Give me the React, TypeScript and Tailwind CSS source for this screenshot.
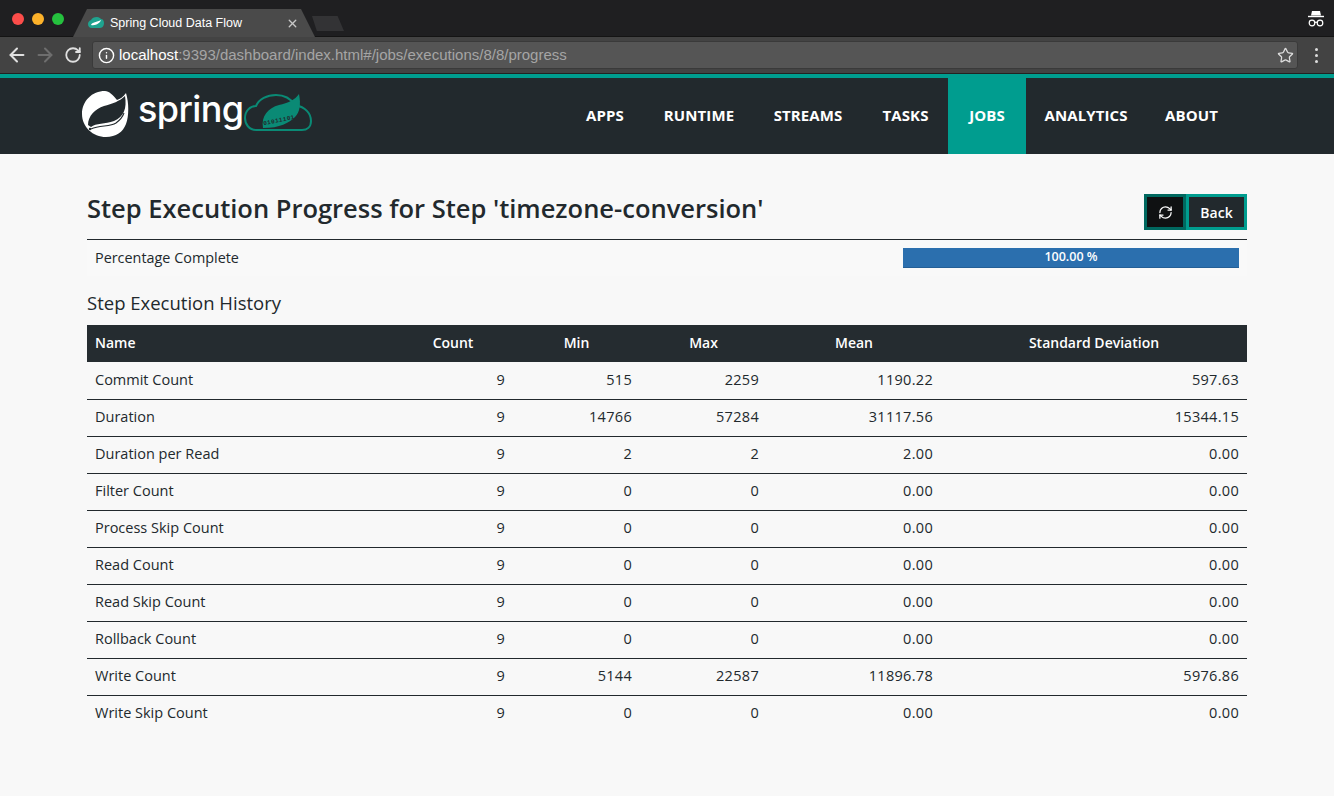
import React from "react";
import { ArrowLeft, ArrowRight, RotateCw, Info, Star, X, RefreshCw } from "lucide-react";

const navItems = [
  { label: "APPS", width: "w-[80px]" },
  { label: "RUNTIME", width: "w-[108px]" },
  { label: "STREAMS", width: "w-[110px]" },
  { label: "TASKS", width: "w-[85px]" },
  { label: "JOBS", width: "w-[78px]", active: true },
  { label: "ANALYTICS", width: "w-[120px]" },
  { label: "ABOUT", width: "w-[91px]" },
];

const rows = [
  ["Commit Count", "9", "515", "2259", "1190.22", "597.63"],
  ["Duration", "9", "14766", "57284", "31117.56", "15344.15"],
  ["Duration per Read", "9", "2", "2", "2.00", "0.00"],
  ["Filter Count", "9", "0", "0", "0.00", "0.00"],
  ["Process Skip Count", "9", "0", "0", "0.00", "0.00"],
  ["Read Count", "9", "0", "0", "0.00", "0.00"],
  ["Read Skip Count", "9", "0", "0", "0.00", "0.00"],
  ["Rollback Count", "9", "0", "0", "0.00", "0.00"],
  ["Write Count", "9", "5144", "22587", "11896.78", "5976.86"],
  ["Write Skip Count", "9", "0", "0", "0.00", "0.00"],
];

const headers = ["Count", "Min", "Max", "Mean", "Standard Deviation"];

const Leaf = () => (
  <svg width="56" height="54" viewBox="0 0 56 54" className="shrink-0">
    <path
      d="M48 7C45 11 42 13 39 14 35 9 31 5 27 5 14 5 4 15 4 28S15 51 28 51C38 51 45 46 48 38 51 30 51 17 48 7Z"
      fill="#fff"
    />
    <path
      d="M10 39C10 30 17 23 26 20 34 18 42 15 47 10 49 22 46 31 36 35 27 38 18 37 13 41Z"
      fill="#22292d"
    />
    <path d="M13 43C22 39 32 41 38 37 42 34 45 30 46 27" fill="none" stroke="#22292d" strokeWidth="1.1" />
    <circle cx="12" cy="43" r="1.2" fill="#22292d" />
  </svg>
);

const CloudLogo = () => (
  <div className="relative w-[72px] h-[50px] shrink-0 mb-[4px]">
    <svg width="72" height="50" viewBox="0 0 72 50" className="absolute inset-0">
      <path
        d="M14 44C7 44 3 38 3 32 3 25 8 20 14 20 17 13 25 9 34 9 42 9 49 13 53 19 64 21 69 28 69 35 69 41 65 44 60 44Z"
        fill="none"
        stroke="#0a8a75"
        strokeWidth="2"
      />
      <path d="M21 42C19 30 26 22 37 19 46 17 53 14 57 8 59 18 58 26 53 31 47 37 38 42 21 42Z" fill="#0a8a75" />
    </svg>
    <span className="absolute left-[21px] top-[31px] text-[6px] leading-[7px] tracking-[0.4px] font-bold text-[#22292d] font-['Liberation_Mono',monospace] -rotate-[12deg]">
      01011101
    </span>
  </div>
);

const Incognito = () => (
  <svg width="18" height="18" viewBox="0 0 18 18" fill="none">
    <path d="M5 1h8l1 4.5H4Z" fill="#fff" />
    <path d="M1 6.5h16" stroke="#fff" strokeWidth="1.4" />
    <circle cx="5" cy="13" r="2.8" stroke="#fff" strokeWidth="1.2" />
    <circle cx="13" cy="13" r="2.8" stroke="#fff" strokeWidth="1.2" />
    <path d="M7.8 12.5c.8-.5 1.6-.5 2.4 0" stroke="#fff" strokeWidth="1.2" />
  </svg>
);

const Favicon = () => (
  <svg width="16" height="12" viewBox="0 0 16 12">
    <path
      d="M4 11C1 11 0 9 0 7c0-2 1-3 3-4 1-2 3-3 6-3 2 0 3 1 4 2 2 0 3 2 3 4s-1 5-4 5Z"
      fill="#1fa38f"
    />
    <path d="M3 8c1-3 6-3 10-5-1 3-5 6-10 5Z" fill="#fff" />
  </svg>
);

const BrowserChrome = () => (
  <div className="font-['Liberation_Sans',Arial,sans-serif]">
    <div className="h-[37px] bg-[#1f1f21] border-b border-[#141414] flex items-end relative">
      <div className="absolute left-[12px] top-[13px] flex gap-[8px]">
        <span className="w-[12px] h-[12px] rounded-full bg-[#fc4d4a]" />
        <span className="w-[12px] h-[12px] rounded-full bg-[#fdb22a]" />
        <span className="w-[12px] h-[12px] rounded-full bg-[#25c13e]" />
      </div>
      <div className="ml-[73px] mb-[-1px] w-[242px] h-[28px] bg-[#4a4a4a] [clip-path:polygon(0_100%,14px_0,228px_0,100%_100%)] flex items-center pl-[15px] pr-[16px] text-white text-[12.5px]">
        <Favicon />
        <span className="ml-[6px] grow">Spring Cloud Data Flow</span>
        <X size={13} strokeWidth={2.5} className="text-[#c8c8c8]" />
      </div>
      <div className="ml-[-3px] mb-[5px] w-[32px] h-[15px] bg-[#333335] [clip-path:polygon(0_0,80%_0,100%_100%,15%_100%)]" />
      <div className="absolute right-[9px] top-[10px]">
        <Incognito />
      </div>
    </div>
    <div className="h-[37px] bg-[#434343] border-b border-[#222] flex items-center text-[#e0e0e0]">
      <div className="w-[92px] flex items-center pl-[3px]">
        <span className="w-[28px] flex justify-center">
          <ArrowLeft size={22} strokeWidth={2.2} />
        </span>
        <span className="w-[28px] flex justify-center">
          <ArrowRight size={22} strokeWidth={2.2} className="text-[#6e6e6e]" />
        </span>
        <span className="w-[28px] flex justify-center">
          <RotateCw size={18} strokeWidth={2.4} />
        </span>
      </div>
      <div className="w-[1206px] h-[28px] rounded-[3px] bg-[#555] border border-[#3a3a3a] flex items-center pl-[5px] pr-[3px]">
        <Info size={17} strokeWidth={2} className="text-white" />
        <span className="ml-[4px] grow text-[15px] pt-[1px] text-[#a5a5a5]">
          <span className="text-white">localhost</span>:9393/dashboard/index.html#/jobs/executions/8/8/progress
        </span>
        <Star size={17} strokeWidth={1.8} className="text-[#ddd]" />
      </div>
      <div className="grow flex flex-col items-center gap-[3px]">
        <span className="w-[3px] h-[3px] rounded-full bg-[#ddd]" />
        <span className="w-[3px] h-[3px] rounded-full bg-[#ddd]" />
        <span className="w-[3px] h-[3px] rounded-full bg-[#ddd]" />
      </div>
    </div>
  </div>
);

const Header = () => (
  <div className="border-t-[4px] border-[#009d8f] bg-[#22292d] h-[80px] flex justify-between pl-[78px] pr-[97px]">
    <div className="flex items-center mb-[6px]">
      <Leaf />
      <span className="ml-[4px] w-[104px] shrink-0 whitespace-nowrap text-white text-[36px] leading-none font-['Inter',sans-serif] font-medium tracking-[-0.6px] mb-[8px]">
        spring
      </span>
      <CloudLogo />
    </div>
    <nav className="flex">
      {navItems.map((item) => (
        <a
          key={item.label}
          className={`${item.width} flex items-center justify-center pb-[1px] text-white text-[15px] font-bold tracking-[0.1px] ${
            item.active ? "bg-[#009d8f]" : ""
          }`}
        >
          {item.label}
        </a>
      ))}
    </nav>
  </div>
);

export default function App() {
  return (
    <div className="h-[796px] overflow-hidden bg-[#f8f8f8] text-[#22292d] font-['Open_Sans',sans-serif]">
      <BrowserChrome />
      <Header />
      <main className="px-[87px] pt-[40px]">
        <div className="flex justify-between items-start h-[46px] border-b border-[#22292d]">
          <h1 className="text-[25.5px] leading-[28px] font-semibold">
            Step Execution Progress for Step 'timezone-conversion'
          </h1>
          <div className="flex">
            <button className="w-[42px] h-[36px] bg-[#0f1112] border-[3px] border-[#00685f] flex items-center justify-center text-white">
              <RefreshCw size={15} strokeWidth={2} />
            </button>
            <button className="w-[61px] h-[36px] bg-[#22292d] border-[3px] border-[#009d8f] flex items-center justify-center text-white text-[14px] font-semibold">
              Back
            </button>
          </div>
        </div>
        <div className="flex items-center justify-between h-[36px] pl-[8px] pr-[8px] text-[14.4px] bg-[#f9f9f9]">
          <span>Percentage Complete</span>
          <div className="w-[336px] h-[20px] bg-[#2b6fae] border-b border-[#245f96] text-white text-[12.5px] font-semibold leading-[18px] text-center">
            100.00 %
          </div>
        </div>
        <h2 className="mt-[15px] text-[18.5px] leading-[24px]">Step Execution History</h2>
        <table className="mt-[10px] w-[1160px] table-fixed border-collapse text-[14.5px]">
          <colgroup>
            <col className="w-[306px]" />
            <col className="w-[120px]" />
            <col className="w-[127px]" />
            <col className="w-[127px]" />
            <col className="w-[174px]" />
            <col className="w-[306px]" />
          </colgroup>
          <thead>
            <tr className="h-[37px] bg-[#252c30] text-white text-[14px]">
              <th className="px-[8px] pb-[3px] text-left font-semibold">Name</th>
              {headers.map((h) => (
                <th key={h} className="px-[8px] pb-[3px] text-center font-semibold">
                  {h}
                </th>
              ))}
            </tr>
          </thead>
          <tbody>
            {rows.map((row) => (
              <tr key={row[0]} className="h-[37px] border-t border-[#22292d] first:border-t-0">
                {row.map((cell, i) => (
                  <td
                    key={i}
                    className={`px-[8px] pb-[1px] ${i === 0 ? "text-left" : "text-right tracking-[0.3px]"}`}
                  >
                    {cell}
                  </td>
                ))}
              </tr>
            ))}
          </tbody>
        </table>
      </main>
    </div>
  );
}
